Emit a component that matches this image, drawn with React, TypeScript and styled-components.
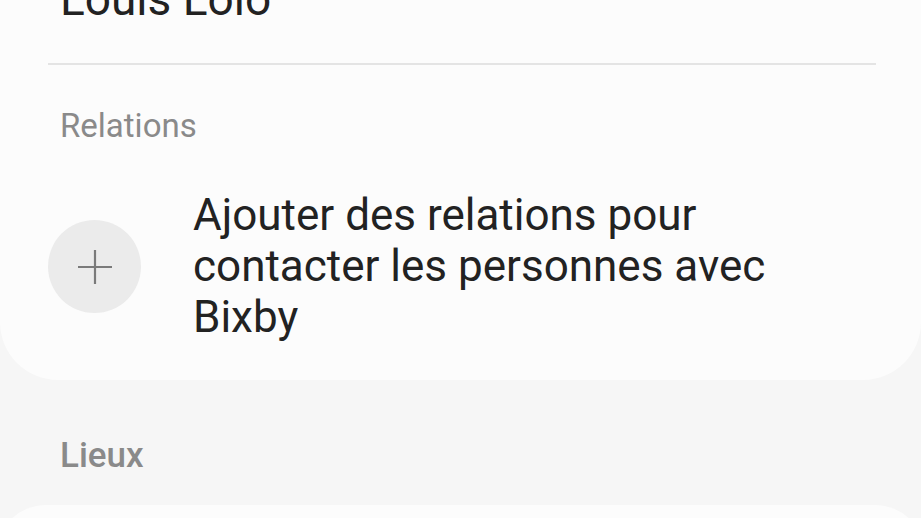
import React from 'react';
import styled, { createGlobalStyle } from 'styled-components';

const GlobalStyle = createGlobalStyle`
  html, body {
    margin: 0;
    padding: 0;
    background: #f6f6f6;
    font-family: Roboto, "Noto Sans", "Liberation Sans", sans-serif;
    overflow: hidden;
  }
`;

const Page = styled.div`
  width: 921px;
  height: 518px;
  overflow: hidden;
  background: #f6f6f6;
`;

const Card = styled.div<{ $top?: boolean }>`
  background: #fcfcfc;
  border-radius: ${(p) => (p.$top ? '50px 50px 0 0' : '0 0 58px 58px')};
`;

const NameRow = styled.div`
  padding: 0 48px 0 60px;
  height: 63px;
  display: flex;
  align-items: flex-end;
`;

const Name = styled.div`
  font-size: 46px;
  line-height: 52px;
  color: #222;
  margin-bottom: 38px;
`;

const Divider = styled.div`
  height: 2px;
  margin: 0 45px 0 48px;
  background: #e4e4e4;
`;

const SectionLabel = styled.div<{ $bold?: boolean }>`
  padding: 0 60px;
  font-size: ${(p) => (p.$bold ? '35px' : '33px')};
  font-weight: ${(p) => (p.$bold ? 500 : 400)};
  line-height: 40px;
  color: #8a8a8a;
`;

const RelationsLabel = styled(SectionLabel)`
  padding-top: 41px;
`;

const PlacesLabel = styled(SectionLabel)`
  padding-top: 56px;
  padding-bottom: 29px;
`;

const AddRow = styled.div`
  display: flex;
  align-items: center;
  gap: 52px;
  padding: 44px 48px 37px 48px;
`;

const AddCircle = styled.div`
  flex: none;
  width: 93px;
  height: 93px;
  border-radius: 50%;
  background: #ebebeb;
  display: flex;
  align-items: center;
  justify-content: center;
`;

const AddText = styled.div`
  font-size: 44px;
  line-height: 51px;
  color: #222;
  max-width: 640px;
`;

const BottomCard = styled(Card)`
  height: 60px;
  margin: 0 -4px;
`;

export default function App() {
  return (
    <Page>
      <GlobalStyle />
      <Card>
        <NameRow>
          <Name>Louis Lolo</Name>
        </NameRow>
        <Divider />
        <RelationsLabel>Relations</RelationsLabel>
        <AddRow>
          <AddCircle>
            <svg width="36" height="36" viewBox="0 0 36 36">
              <path d="M18 1v34M1 18h34" stroke="#7a7a7a" strokeWidth="2.2" fill="none" />
            </svg>
          </AddCircle>
          <AddText>Ajouter des relations pour contacter les personnes avec Bixby</AddText>
        </AddRow>
      </Card>
      <PlacesLabel $bold>Lieux</PlacesLabel>
      <BottomCard $top />
    </Page>
  );
}
